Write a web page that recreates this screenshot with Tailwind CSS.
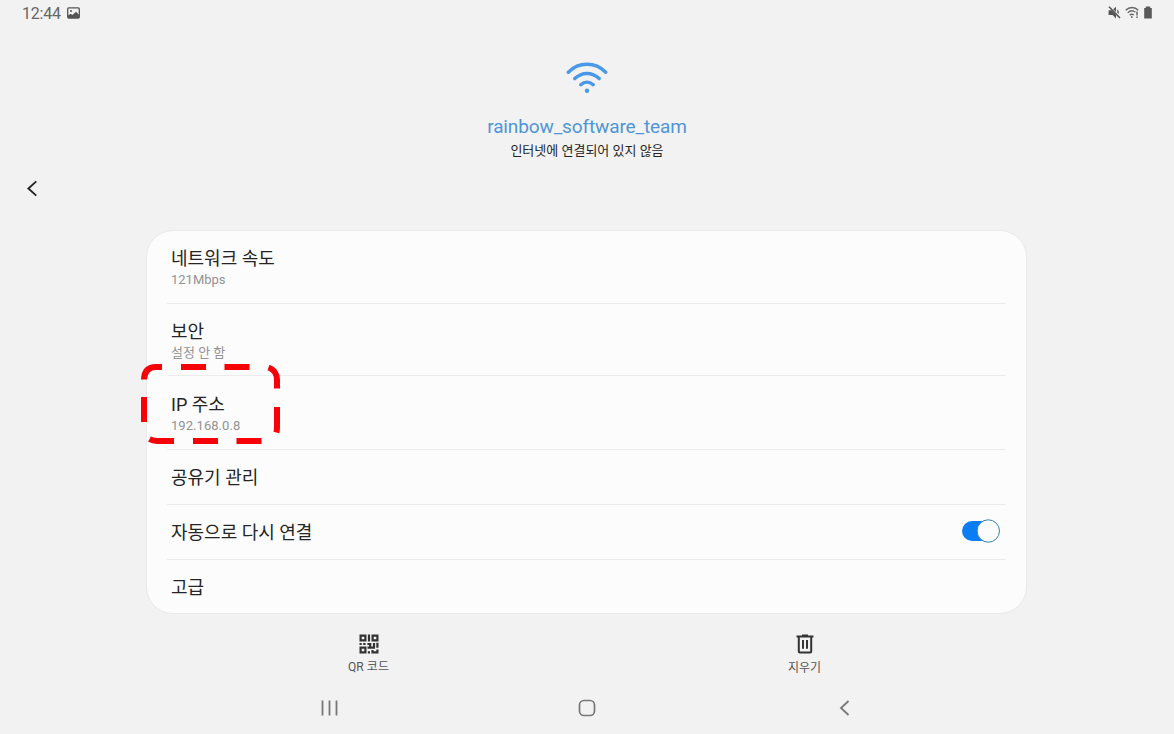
<!DOCTYPE html>
<html lang="ko">
<head>
<meta charset="utf-8">
<title>Wi-Fi</title>
<script src="https://cdn.jsdelivr.net/npm/@tailwindcss/browser@4"></script>
</head>
<body class="relative flex h-[734px] w-[1174px] flex-col overflow-hidden bg-[#f2f2f2] font-['Roboto','Noto_Sans_CJK_KR',sans-serif] text-[#252525]">
  <header class="flex h-7 items-start justify-between pl-[22px] pr-[21px] text-[#666]">
    <div class="flex items-center gap-[6px]">
      <span class="text-[16px] leading-7 tracking-[-0.2px]">12:44</span>
      <svg class="mb-[2px] h-[12px] w-[13px]" viewBox="0 0 13 12"><rect x=".7" y=".9" width="11.6" height="10.2" rx="1" fill="#f2f2f2" stroke="#555" stroke-width="1.3"/><path d="M1 11V8.6l2.6-1.8 1.8 1.3L9 4.8l3 3V11z" fill="#555"/><circle cx="4" cy="4" r="1" fill="#555"/></svg>
    </div>
    <div class="flex items-center gap-[4px] pt-[6px]">
      <svg class="h-[13px] w-[13px]" viewBox="0 0 13 13"><path d="M.6 4.2h3L8 8.800v3.600L4.600 9H.6zM5.200 3.200 8 .8V6zM9.300 3.400c1 .6 1.500 1.600 1.500 2.800L10.600 8 9.300 6.800z" fill="#555"/><path d="M1 .8 12 12" stroke="#555" stroke-width="1.6"/></svg>
      <svg class="h-[13px] w-[14px]" viewBox="0 0 14 13" fill="none" stroke="#666" stroke-width="1.3"><path d="M.7 4.2C4.2.6 9.8.6 13.3 4.2M2.7 6.9C5.2 4.4 8.2 4.400 10.4 6.2M4.7 9.2C6 8 7.6 8 8.8 9.1"/><circle cx="6.8" cy="11" r=".9" fill="#666" stroke="none"/><path d="M12 5.6v3.900m0 1v1.600" stroke-width="1.5"/></svg>
      <svg class="h-[13px] w-[10px]" viewBox="0 0 10 13"><path d="M1.200 2h1.600V.6h4.400V2h1.600v10.400H1.200z" fill="#5a5a5a"/></svg>
    </div>
  </header>

  <section class="flex h-[133px] flex-col items-center pt-[34px]">
    <svg class="h-[32px] w-[42px] shrink-0" viewBox="0 0 42 32" fill="none" stroke="#4a98e8" stroke-width="3.4" stroke-linecap="round"><path d="M2.300 10.200C12.800-.4 29.200-.4 39.700 10.200M8.800 16.600c7.200-6.800 17.200-6.800 24.400 0M14.800 22.700c3.800-3.400 8.600-3.400 12.400 0"/><circle cx="21" cy="28.700" r="2.200" fill="#4a98e8" stroke="none"/></svg>
    <h1 class="mt-[21px] whitespace-nowrap text-[19px] leading-6 tracking-[-0.12px] text-[#4f95d8]">rainbow_software_team</h1>
    <p class="mt-[2px] whitespace-nowrap text-[13px] leading-5">인터넷에 연결되어 있지 않음</p>
  </section>

  <nav class="flex h-[69px] pl-[26px] pt-[19px]">
    <svg class="h-[17px] w-[12px]" viewBox="0 0 12 18" fill="none" stroke="#252525" stroke-width="2"><path d="M10.500 1.500 2.200 9l8.300 7.500"/></svg>
  </nav>

  <main class="ml-[146px] flex h-[384px] w-[881px] flex-col rounded-[27px] border border-[#e9e9e9] bg-[#fcfcfc] px-5 text-[18px]">
    <div class="flex h-[73px] flex-col border-b border-[#ececec] pl-1 pt-[16px]"><span class="leading-6">네트워크 속도</span><span class="-mt-px text-[13px] leading-5 text-[#929292]">121Mbps</span></div>
    <div class="flex h-[72px] flex-col border-b border-[#ececec] pl-1 pt-[16px]"><span class="leading-6">보안</span><span class="-mt-px text-[13px] leading-5 text-[#929292]">설정 안 함</span></div>
    <div class="flex h-[74px] flex-col border-b border-[#ececec] pl-1 pt-[17px]"><span class="leading-6">IP 주소</span><span class="-mt-px text-[13px] leading-5 tracking-[0.05px] text-[#929292]">192.168.0.8</span></div>
    <div class="flex h-[55px] items-center border-b border-[#ececec] pl-1">공유기 관리</div>
    <div class="flex h-[55px] items-center justify-between border-b border-[#ececec] pl-1 pr-[6px]">
      <span>자동으로 다시 연결</span>
      <svg class="mb-[2px] h-[24px] w-[39px]" viewBox="0 0 39 24"><rect x="1" y="2" width="36" height="20" rx="10" fill="#0a7df5"/><circle cx="27.300" cy="12" r="11.200" fill="#fcfcfc" stroke="#357fae" stroke-width="1"/></svg>
    </div>
    <div class="flex h-[53px] items-center pl-1 pt-[2px]">고급</div>
  </main>

  <div class="flex h-[70px] px-[150px] pt-[20px] text-[12px] text-[#555]">
    <div class="flex w-[437px] flex-col items-center">
      <svg class="h-5 w-5" viewBox="0 0 20 20" fill="none" stroke="#333" stroke-width="2.2"><path d="M1.600 1.600h4.800v4.800H1.600zM13.600 1.600h4.800v4.800h-4.800zM1.600 13.600h4.800v4.800H1.600zM10 .5v7M.5 10h2.200M4.200 10h2.400M8.400 10h2.800v3.300M8.500 13.600h6.500V9M18.400 8.800v5M18.400 15.500v4M13.500 16v2.400h5M8.800 18.400H11"/></svg>
      <span class="mt-[5px] leading-4 tracking-[0.1px]">QR 코드</span>
    </div>
    <div class="flex w-[435px] flex-col items-center">
      <svg class="h-5 w-[18px]" viewBox="0 0 18 20" fill="none" stroke="#333" stroke-width="2"><path d="M.5 2.400h17M6 1.400h6M2.800 2.500v15q0 1 1 1h10.400q1 0 1-1v-15M7 6v8.800M11 6v8.800"/></svg>
      <span class="mt-[6px] leading-4">지우기</span>
    </div>
  </div>

  <footer class="flex h-[48px] items-center justify-between pl-[321px] pr-[324px]">
    <svg class="h-[16px] w-[17px]" viewBox="0 0 17 16" stroke="#777" stroke-width="1.8"><path d="M1.500.5v15M8.500.5v15M15.500.5v15"/></svg>
    <svg class="ml-[-3px] h-[18px] w-[18px]" viewBox="0 0 18 18" fill="none" stroke="#777" stroke-width="1.7"><rect x="1.500" y="1.500" width="15" height="15" rx="4.500"/></svg>
    <svg class="h-[16px] w-[11px]" viewBox="0 0 11 16" fill="none" stroke="#777" stroke-width="1.8"><path d="M9.500 1 2 8l7.500 7"/></svg>
  </footer>

  <svg class="absolute left-[138px] top-[361px] h-[86px] w-[145px]" viewBox="138 361 145 86" fill="none" stroke="#f80008" stroke-width="6"><path d="M144 379.500Q144.500 367 156 367H162M181 367h25M224.500 367h25M268.500 367.500Q277 370.500 277 380V388.500M277 407v20q0 3-.6 5.500M261.500 441h-25M218 441h-25M174 441H157Q153 441 149.500 439.200M144 422v-25"/></svg>
</body>
</html>
